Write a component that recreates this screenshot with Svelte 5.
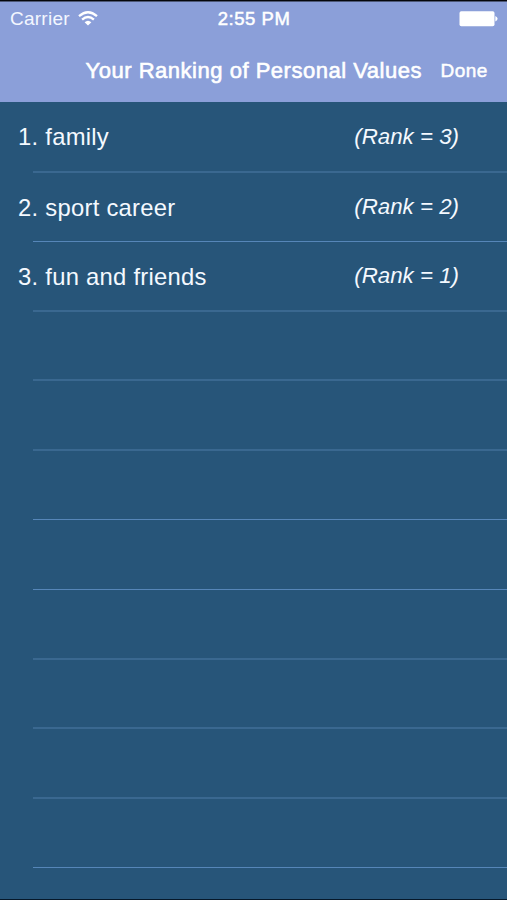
<script>
  const rows = [
    { name: '1. family', rank: '(Rank = 3)', height: 71, line: 'soft' },
    { name: '2. sport career', rank: '(Rank = 2)', height: 69, line: 'sharp' },
    { name: '3. fun and friends', rank: '(Rank = 1)', height: 70, line: 'soft' },
    { height: 69, line: 'soft' },
    { height: 70, line: 'soft' },
    { height: 69, line: 'sharp' },
    { height: 70, line: 'sharp' },
    { height: 70, line: 'soft' },
    { height: 69, line: 'soft' },
    { height: 70, line: 'soft' },
    { height: 69, line: 'sharp' }
  ];
</script>

<div class="screen">
  <header>
    <div class="status">
      <div class="carrier">
        <span class="carrier-name">Carrier</span>
        <svg width="20" height="15" viewBox="0 0 20 15" fill="none" stroke="#fff" stroke-width="2.3">
          <path d="M1 5.2 Q10 -2.6 19 5.2" />
          <path d="M4.1 8.7 Q10 3.3 15.9 8.7" />
          <path d="M6.6 11.2 Q10 8.2 13.4 11.2 L10 14.6Z" fill="#fff" stroke="none" />
        </svg>
      </div>
      <span class="time">2:55 PM</span>
      <div class="battery">
        <svg width="39" height="16" viewBox="0 0 39 16" fill="#fff">
          <rect x="0.5" y="0.3" width="35" height="15" rx="1.8" />
          <path d="M36.3 5 Q38.6 6 38.6 7.8 Q38.6 9.6 36.3 10.6Z" />
        </svg>
      </div>
    </div>
    <nav>
      <h1>Your Ranking of Personal Values</h1>
      <span class="done">Done</span>
    </nav>
  </header>
  <main>
    {#each rows as row}
      <div class="row" style="height: {row.height}px">
        {#if row.name}
          <div class="content">
            <span class="name">{row.name}</span>
            <span class="rank">{row.rank}</span>
          </div>
        {/if}
        <div class="line {row.line}"></div>
      </div>
    {/each}
  </main>
</div>

<style>
  .screen {
    box-sizing: border-box;
    width: 507px;
    height: 900px;
    overflow: hidden;
    display: flex;
    flex-direction: column;
    background: #275579;
    border-bottom: 1px solid #06182a;
    color: #fff;
    font-family: 'Liberation Sans', Arial, sans-serif;
    white-space: nowrap;
  }
  header {
    box-sizing: border-box;
    height: 102px;
    flex: none;
    background: #8b9fd9;
    border-top: 1px solid #05060b;
    box-shadow: inset 0 1px #4d5877;
  }
  .status {
    display: grid;
    grid-template-columns: 1fr auto 1fr;
    align-items: center;
    height: 35px;
    padding: 0 9px 0 10px;
  }
  .carrier {
    display: flex;
    align-items: center;
    gap: 8px;
  }
  .carrier-name {
    font-size: 19px;
    letter-spacing: 0.25px;
    color: #f3f7ff;
  }
  .time {
    font-size: 18.5px;
    letter-spacing: 0.55px;
    -webkit-text-stroke: 0.5px #fff;
  }
  .battery {
    display: flex;
    justify-content: flex-end;
  }
  nav {
    display: flex;
    align-items: center;
    height: 66px;
    padding: 3px 0 0 85.5px;
    box-sizing: border-box;
  }
  h1 {
    margin: 0;
    width: 355px;
    font-size: 22px;
    font-weight: 400;
    letter-spacing: 0.52px;
    -webkit-text-stroke: 0.6px #fff;
  }
  .done {
    font-size: 19px;
    letter-spacing: 0.5px;
    -webkit-text-stroke: 0.5px #fff;
  }
  .row {
    display: flex;
    flex-direction: column;
    justify-content: flex-end;
  }
  .content {
    flex: 1;
    display: flex;
    align-items: center;
    justify-content: space-between;
    padding: 1px 48px 0 18px;
  }
  .name {
    font-size: 23.8px;
    letter-spacing: 0.27px;
    color: #f4f9ff;
  }
  .rank {
    font-size: 22.3px;
    font-style: italic;
    color: #f4f9ff;
    padding-bottom: 1px;
  }
  .line {
    flex: none;
    margin-left: 33px;
  }
  .soft {
    height: 2px;
    background: #3a6890;
  }
  .sharp {
    height: 1px;
    background: #5686b8;
  }
</style>
